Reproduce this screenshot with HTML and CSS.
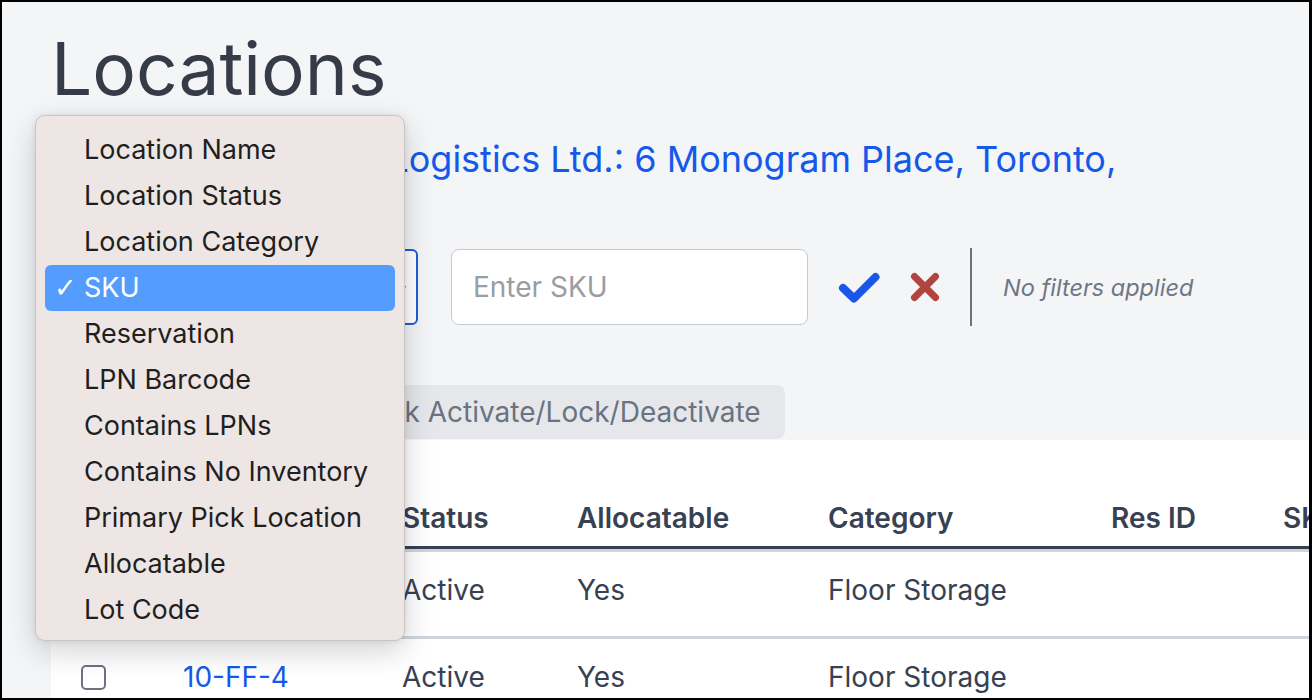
FILE: index.html
```html
<!DOCTYPE html>
<html lang="en">
<head>
    <meta charset="UTF-8">
    <meta name="viewport" content="width=device-width, initial-scale=1.0">
    <title>Locations</title>
    <link rel="stylesheet" href="styles.css">
</head>
<body>
    <div class="page">
        <h1>Locations</h1>
        <a class="facility" href="#">Primary DC · Arrow Logistics Ltd.: 6 Monogram Place, Toronto, ON M3C 1T7</a>

        <div class="filters">
            <div class="filter-field">
                <div class="filter-select">SKU<span class="caret">▾</span></div>
                <ul class="filter-menu">
                    <li>Location Name</li>
                    <li>Location Status</li>
                    <li>Location Category</li>
                    <li class="selected">SKU</li>
                    <li>Reservation</li>
                    <li>LPN Barcode</li>
                    <li>Contains LPNs</li>
                    <li>Contains No Inventory</li>
                    <li>Primary Pick Location</li>
                    <li>Allocatable</li>
                    <li>Lot Code</li>
                </ul>
            </div>
            <input class="filter-input" type="text" placeholder="Enter SKU">
            <button class="icon-btn" title="Apply">
                <svg width="42" height="32" viewBox="0 0 42 32"><path d="M5 17 L16 27.5 L37.5 6" fill="none" stroke="#1a57e8" stroke-width="8" stroke-linecap="round" stroke-linejoin="round"/></svg>
            </button>
            <button class="icon-btn" title="Clear">
                <svg width="30" height="30" viewBox="0 0 30 30"><path d="M4.5 4.5 L25.5 25.5 M25.5 4.5 L4.5 25.5" fill="none" stroke="#b04540" stroke-width="7" stroke-linecap="round"/></svg>
            </button>
            <span class="divider"></span>
            <span class="filter-status">No filters applied</span>
        </div>

        <div class="toolbar">
            <button class="btn">Create Location</button>
            <button class="btn">Bulk Activate/Lock/Deactivate</button>
        </div>

        <div class="panel">
            <table>
                <colgroup>
                    <col style="width: 132px">
                    <col style="width: 219px">
                    <col style="width: 175px">
                    <col style="width: 251px">
                    <col style="width: 283px">
                    <col style="width: 172px">
                    <col style="width: 200px">
                </colgroup>
                <thead>
                    <tr>
                        <th><input type="checkbox"></th>
                        <th>Name</th>
                        <th>Status</th>
                        <th>Allocatable</th>
                        <th>Category</th>
                        <th>Res ID</th>
                        <th>SKU</th>
                    </tr>
                </thead>
                <tbody>
                    <tr>
                        <td><input type="checkbox"></td>
                        <td><a href="#">10-FF-3</a></td>
                        <td>Active</td>
                        <td>Yes</td>
                        <td>Floor Storage</td>
                        <td></td>
                        <td></td>
                    </tr>
                    <tr>
                        <td><input type="checkbox"></td>
                        <td><a href="#">10-FF-4</a></td>
                        <td>Active</td>
                        <td>Yes</td>
                        <td>Floor Storage</td>
                        <td></td>
                        <td></td>
                    </tr>
                </tbody>
            </table>
        </div>
    </div>
</body>
</html>
```
FILE: styles.css
```css
html, body {
    margin: 0;
}

body {
    width: 1312px;
    height: 700px;
    box-sizing: border-box;
    border: 2px solid #000;
    border-right-width: 3px;
    background: #f4f5f7;
    font-family: Inter, "Noto Sans", sans-serif;
    color: #374151;
    overflow: hidden;
}

.page {
    padding-left: 49px;
}

h1 {
    margin: 23px 0 0;
    font-size: 73px;
    line-height: 88px;
    font-weight: 400;
    color: #363b48;
}

.facility {
    display: block;
    width: 1090px;
    margin-top: 24px;
    font-size: 36px;
    line-height: 44px;
    color: #1459ea;
    text-decoration: none;
}

/* filter bar */
.filters {
    display: flex;
    align-items: center;
    height: 78px;
    margin-top: 23px;
}

.filter-field {
    position: relative;
}

.filter-select {
    width: 367px;
    height: 76px;
    box-sizing: border-box;
    border: 2px solid #1b5fd1;
    border-radius: 6px;
    background: #fff;
    display: flex;
    align-items: center;
    justify-content: space-between;
    padding: 0 10px 0 20px;
    font-size: 28px;
}

.caret {
    font-size: 12px;
    color: #6b7280;
}

.filter-menu {
    position: absolute;
    left: -16px;
    top: -134px;
    z-index: 10;
    width: 370px;
    box-sizing: border-box;
    margin: 0;
    padding: 11px 0 7px;
    list-style: none;
    background: #ede6e4;
    border: 1px solid #c9c3c1;
    border-radius: 10px;
    box-shadow: 0 10px 30px rgba(0, 0, 0, 0.18), 0 0 6px rgba(0, 0, 0, 0.08);
    font-size: 27px;
    color: #1f1f1f;
}

.filter-menu li {
    position: relative;
    height: 46px;
    line-height: 46px;
    margin: 0 9px;
    padding-left: 39px;
    border-radius: 6px;
}

.filter-menu li.selected {
    background: #549cfd;
    color: #fff;
}

.filter-menu li.selected::before {
    content: "✓";
    position: absolute;
    left: 9px;
    font-family: "DejaVu Sans", sans-serif;
    font-size: 27px;
    font-weight: 700;
}

.filter-input {
    width: 357px;
    height: 76px;
    box-sizing: border-box;
    margin-left: 33px;
    padding: 0 21px;
    border: 1px solid #c6c9d0;
    border-radius: 8px;
    background: #fff;
    font-family: inherit;
    font-size: 28px;
    color: #374151;
}

.filter-input::placeholder {
    color: #9a9da3;
}

.icon-btn {
    border: none;
    background: none;
    padding: 0;
    display: flex;
    cursor: pointer;
}

.icon-btn:first-of-type {
    margin-left: 30px;
}

.icon-btn + .icon-btn {
    margin-left: 30px;
}

.divider {
    width: 2px;
    height: 78px;
    margin-left: 30px;
    background: #6b7280;
}

.filter-status {
    margin-left: 31px;
    font-size: 23.5px;
    font-style: italic;
    color: #707684;
}

/* toolbar */
.toolbar {
    display: flex;
    gap: 30px;
    margin-top: 59px;
}

.btn {
    height: 54px;
    padding: 0 24px;
    border: none;
    border-radius: 8px;
    background: #e5e7eb;
    font-family: inherit;
    font-size: 28px;
    color: #6b7280;
}

/* locations table */
.panel {
    margin-top: 1px;
    background: #fff;
}

table {
    table-layout: fixed;
    width: 1432px;
    border-collapse: separate;
    border-spacing: 0;
    font-size: 28px;
}

th, td {
    padding: 0;
    text-align: left;
    line-height: 28px;
    white-space: nowrap;
}

th {
    padding: 64px 0 14px;
    font-weight: 600;
    border-bottom: 3px solid #374151;
}

td {
    padding: 24px 0 32px;
    border-top: 3px solid #d0d4db;
}

th:first-child, td:first-child {
    padding-left: 30px;
}

td a {
    color: #1459ea;
    text-decoration: none;
}

input[type="checkbox"] {
    appearance: none;
    width: 25px;
    height: 25px;
    margin: 0;
    vertical-align: -3px;
    border: 2px solid #6b7280;
    border-radius: 5px;
    background: #fff;
}
```
